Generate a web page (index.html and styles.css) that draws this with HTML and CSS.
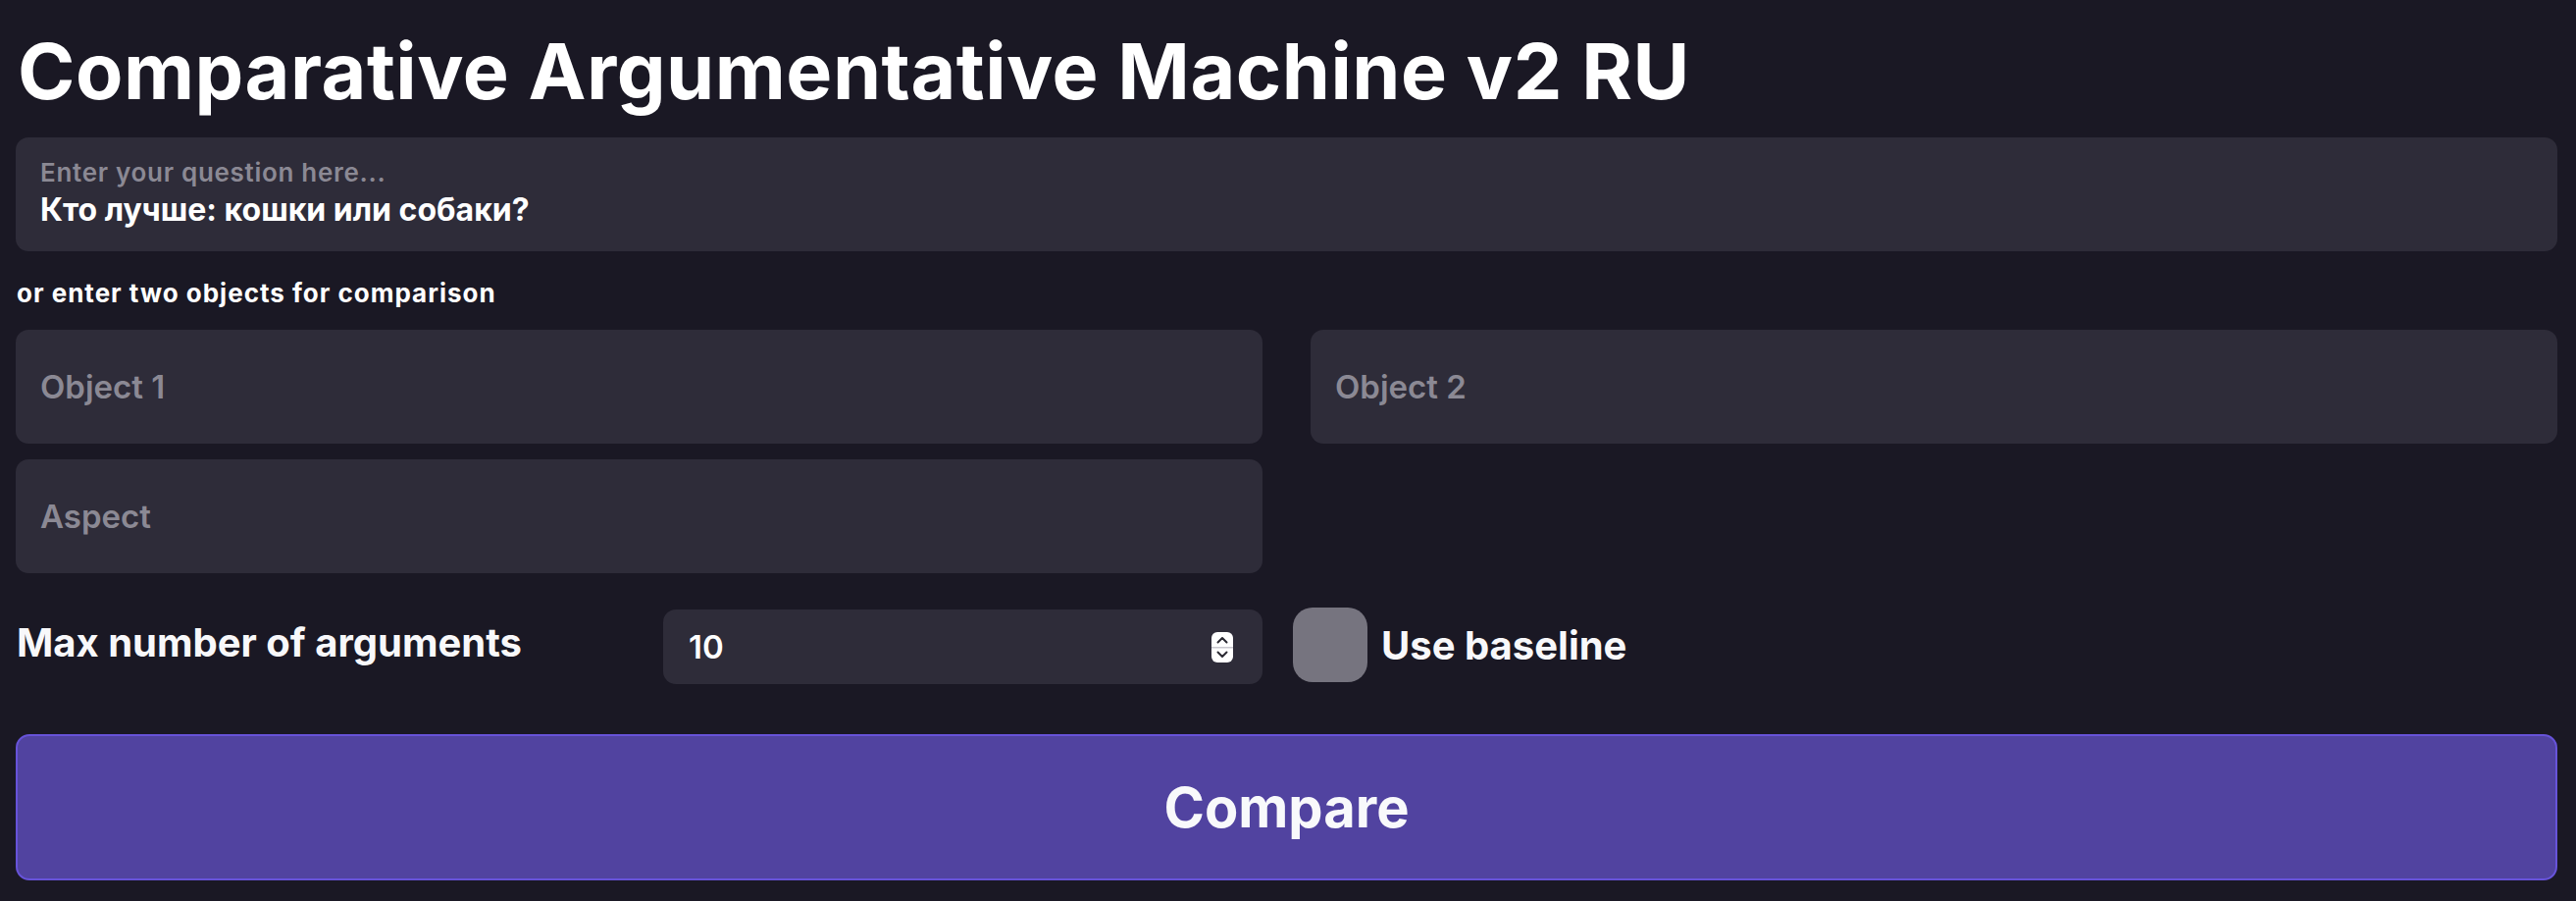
FILE: index.html
```html
<!DOCTYPE html>
<html lang="en">
<head>
<meta charset="utf-8">
<title>Comparative Argumentative Machine v2 RU</title>
<link rel="stylesheet" href="styles.css">
</head>
<body>
<main class="app">
  <h1 class="title">Comparative Argumentative Machine v2 RU</h1>

  <div class="field question">
    <div class="field-label">Enter your question here...</div>
    <div class="field-value">Кто лучше: кошки или собаки?</div>
  </div>

  <p class="hint">or enter two objects for comparison</p>

  <div class="grid-two">
    <div class="field input-box"><span class="placeholder">Object 1</span></div>
    <div class="field input-box"><span class="placeholder">Object 2</span></div>
    <div class="field input-box"><span class="placeholder">Aspect</span></div>
  </div>

  <div class="options">
    <div class="number-group">
      <span class="opt-label">Max number of arguments</span>
      <div class="number-input">
        <span class="number-value">10</span>
        <svg class="spinner" width="22" height="31" viewBox="0 0 22 31" aria-hidden="true">
          <rect x="0" y="0" width="22" height="31" rx="6" fill="#ffffff"/>
          <rect x="0" y="15" width="22" height="1.5" fill="#c9c8cf"/>
          <path d="M6.5 10.5 L11 6 L15.5 10.5" fill="none" stroke="#2b2a33" stroke-width="2" stroke-linecap="round" stroke-linejoin="round"/>
          <path d="M6.5 20.5 L11 25 L15.5 20.5" fill="none" stroke="#2b2a33" stroke-width="2" stroke-linecap="round" stroke-linejoin="round"/>
        </svg>
      </div>
    </div>
    <label class="check-group">
      <span class="checkbox"></span>
      <span class="opt-label">Use baseline</span>
    </label>
  </div>

  <button class="compare" type="button">Compare</button>
</main>
</body>
</html>
```

FILE: styles.css
```css
html {
  background: #1a1824;
}

body {
  margin: 0;
  background: #1a1824;
  color: #f8f8fa;
  font-family: Inter, "Noto Sans", "DejaVu Sans", sans-serif;
}

.app {
  padding: 29px 19px 20px 16px;
  display: flex;
  flex-direction: column;
}

.title {
  margin: 0 0 25px 2px;
  font-size: 79px;
  line-height: 86px;
  font-weight: 700;
  letter-spacing: 0.5px;
  color: #ffffff;
}

.field {
  background: #2e2c39;
  border-radius: 13px;
  box-sizing: border-box;
}

.question {
  padding: 21px 25px 23px 25px;
}

.field-label {
  font-size: 26px;
  line-height: 29px;
  font-weight: 600;
  letter-spacing: 0.7px;
  color: #8b8994;
}

.field-value {
  margin-top: 5px;
  font-size: 32px;
  line-height: 38px;
  font-weight: 700;
  color: #ffffff;
}

.hint {
  margin: 28px 0 23px 1px;
  font-size: 26px;
  line-height: 29px;
  font-weight: 700;
  letter-spacing: 1px;
  color: #ffffff;
}

.grid-two {
  display: grid;
  grid-template-columns: 1fr 1fr;
  column-gap: 49px;
  row-gap: 16px;
}

.input-box {
  height: 116px;
  display: flex;
  align-items: center;
  padding: 0 25px;
}

.placeholder {
  font-size: 33px;
  font-weight: 600;
  color: #8b8994;
}

.options {
  margin-top: 35px;
  height: 78px;
  display: flex;
  align-items: center;
  gap: 31px;
}

.number-group {
  width: 1271px;
  display: flex;
  align-items: center;
  justify-content: space-between;
}

.opt-label {
  font-size: 40px;
  line-height: 50px;
  font-weight: 700;
  color: #f8f8fa;
}

.number-group .opt-label {
  margin-left: 1px;
  margin-bottom: 6px;
}

.number-input {
  width: 611px;
  height: 76px;
  margin-top: 2px;
  background: #2e2c39;
  border-radius: 13px;
  box-sizing: border-box;
  padding: 0 30px 0 26px;
  display: flex;
  align-items: center;
  justify-content: space-between;
}

.number-value {
  font-size: 33px;
  font-weight: 600;
  color: #ffffff;
}

.spinner {
  display: block;
}

.check-group {
  display: flex;
  align-items: center;
  gap: 14px;
}

.checkbox {
  width: 76px;
  height: 76px;
  border-radius: 20px;
  background: #76747f;
  margin-top: -2px;
}

.compare {
  margin-top: 51px;
  height: 149px;
  width: 100%;
  border: 2px solid #6753d9;
  border-radius: 14px;
  background: #5143a0;
  color: #f8f9fb;
  font-family: Inter, "Noto Sans", "DejaVu Sans", sans-serif;
  font-size: 56px;
  font-weight: 700;
  cursor: pointer;
}
```
